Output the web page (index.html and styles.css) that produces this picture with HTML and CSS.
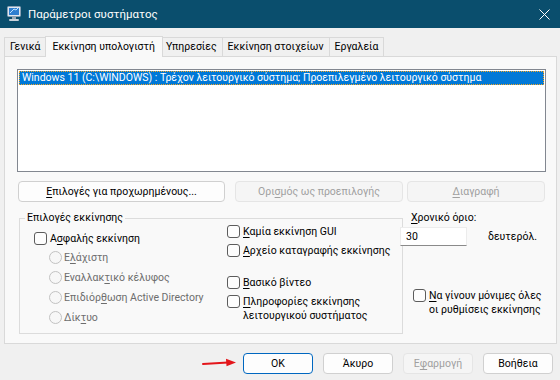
FILE: index.html
```html
<!DOCTYPE html>
<html lang="el">
<head>
    <meta charset="UTF-8">
    <title>Παράμετροι συστήματος</title>
    <link rel="stylesheet" href="styles.css">
</head>
<body>

    <!-- Γραμμή τίτλου -->
    <div class="titlebar">
        <svg class="app-icon" width="14" height="16" viewBox="0 0 14 16">
            <rect x="0.5" y="0.5" width="13" height="10" rx="1" fill="#dfe8f0" stroke="#8aa0b4"/>
            <rect x="2" y="2" width="10" height="7" fill="#2f7fd0"/>
            <path d="M3 7 L7 3 L9 4 L11 2" stroke="#bfe3ff" stroke-width="1" fill="none"/>
            <rect x="5" y="11" width="4" height="2" fill="#9aa8b4"/>
            <rect x="2" y="13" width="10" height="2" rx="1" fill="#c9d2da"/>
        </svg>
        <span class="title">Παράμετροι συστήματος</span>
        <svg class="close" width="11" height="11" viewBox="0 0 11 11">
            <path d="M0.5 0.5 L10.5 10.5 M10.5 0.5 L0.5 10.5" stroke="#fff" stroke-width="1"/>
        </svg>
    </div>

    <!-- Καρτέλες -->
    <div class="tabs">
        <div class="tab">Γενικά</div>
        <div class="tab active">Εκκίνηση υπολογιστή</div>
        <div class="tab">Υπηρεσίες</div>
        <div class="tab">Εκκίνηση στοιχείων</div>
        <div class="tab">Εργαλεία</div>
    </div>

    <div class="panel">
        <div class="listbox">
            <div class="item selected">Windows 11 (C:\WINDOWS) : Τρέχον λειτουργικό σύστημα; Προεπιλεγμένο λειτουργικό σύστημα</div>
        </div>

        <div class="button-row">
            <button class="btn btn-advanced"><u>Ε</u>πιλογές για προχωρημένους...</button>
            <button class="btn btn-set" disabled>Ορι<u>σ</u>μός ως προεπιλογής</button>
            <button class="btn btn-delete" disabled><u>Δ</u>ιαγραφή</button>
        </div>

        <div class="options">
            <fieldset class="boot-group">
                <legend>Επιλογές εκκίνησης</legend>
                <div class="group-body">
                    <div class="col-left">
                        <div class="check-row"><span class="checkbox"></span>Α<u>σ</u>φαλής εκκίνηση</div>
                        <div class="radio-list">
                            <div class="radio-row"><span class="radio"></span>Ε<u>λ</u>άχιστη</div>
                            <div class="radio-row"><span class="radio"></span>Εναλλακ<u>τ</u>ικό κέλυφος</div>
                            <div class="radio-row"><span class="radio"></span>Επιδιόρ<u>θ</u>ωση Active Directory</div>
                            <div class="radio-row"><span class="radio"></span>Δίκ<u>τ</u>υο</div>
                        </div>
                    </div>
                    <div class="col-right">
                        <div class="check-row row-gui"><span class="checkbox"></span><u>Κ</u>αμία εκκίνηση GUI</div>
                        <div class="check-row row-log"><span class="checkbox"></span><u>Α</u>ρχείο καταγραφής εκκίνησης</div>
                        <div class="check-row row-video"><span class="checkbox"></span><u>Β</u>ασικό βίντεο</div>
                        <div class="check-row row-info"><span class="checkbox"></span><span><u>Π</u>ληροφορίες εκκίνησης<br>λειτουργικού συστήματος</span></div>
                    </div>
                </div>
            </fieldset>

            <div class="timeout">
                <div class="timeout-label"><u>Χ</u>ρονικό όριο:</div>
                <div class="timeout-field">
                    <input type="text" value="30">
                    <span class="unit">δευτερόλ.</span>
                </div>
                <div class="check-row row-permanent"><span class="checkbox"></span><span><u>Ν</u>α γίνουν μόνιμες όλες<br>οι ρυθμίσεις εκκίνησης</span></div>
            </div>
        </div>
    </div>

    <div class="footer">
        <button class="btn btn-ok">OK</button>
        <button class="btn">Άκυρο</button>
        <button class="btn" disabled>Ε<u>φ</u>αρμογή</button>
        <button class="btn">Βοήθεια</button>
    </div>

    <!-- Κόκκινο βέλος -->
    <svg class="arrow" width="36" height="10" viewBox="0 0 36 10">
        <path d="M1 6 L26 4.6" stroke="#e3161b" stroke-width="2" stroke-linecap="round"/>
        <path d="M24 0.8 L34 4.4 L24.5 8.2 Z" fill="#e3161b"/>
    </svg>

</body>
</html>
```

FILE: styles.css
```css
body {
    font-family: Roboto, "Noto Sans", sans-serif;
    font-size: 10.5px;
    color: #000;
    background-color: #f0f0f0;
    margin: 0;
    width: 560px;
    height: 380px;
    overflow: hidden;
    position: relative;
}

u {
    text-decoration-thickness: 1px;
    text-underline-offset: 2px;
}

.titlebar {
    height: 28px;
    background-color: #0a4e6d;
    color: #fff;
    display: flex;
    align-items: center;
    padding-left: 7px;
}

.app-icon {
    margin-right: 7px;
}

.title {
    font-size: 11.5px;
    flex: 1;
}

.close {
    margin-right: 10px;
}

.tabs {
    display: flex;
    align-items: flex-end;
    height: 28px;
    padding-left: 4px;
}

.tab {
    height: 18px;
    line-height: 18px;
    padding: 0 5px;
    border: 1px solid #d9d9d9;
    border-bottom: none;
    border-left: none;
    background-color: #f0f0f0;
}

.tab:first-child {
    border-left: 1px solid #d9d9d9;
}

.tab.active {
    height: 20px;
    line-height: 20px;
    background-color: #f9f9f9;
    border-left: 1px solid #d9d9d9;
    margin: 0 -2px 0 -2px;
    padding: 0 7px;
    position: relative;
    top: 1px;
}

.panel {
    box-sizing: border-box;
    width: 553px;
    height: 288px;
    margin-left: 4px;
    background-color: #f9f9f9;
    border: 1px solid #d9d9d9;
    padding: 12px 10px 0 12px;
}

.listbox {
    box-sizing: border-box;
    height: 103px;
    width: 529px;
    background-color: #fff;
    border: 1px solid #828790;
    padding: 1px;
}

.item {
    height: 12px;
    line-height: 12px;
    padding-left: 2px;
    white-space: nowrap;
}

.item.selected {
    background-color: #0078d7;
    color: #fff;
    border: 1px dotted #f5a623;
}

.button-row {
    display: flex;
    margin-top: 9px;
}

.btn {
    font-family: Roboto, "Noto Sans", sans-serif;
    font-size: 10.5px;
    height: 21px;
    padding: 0;
    background-color: #fdfdfd;
    border: 1px solid #d0d0d0;
    border-radius: 4px;
    color: #000;
}

.btn:disabled {
    background-color: #f5f5f5;
    border-color: #e5e5e5;
    color: #a0a0a0;
}

.btn-advanced {
    width: 207px;
    margin-left: 1px;
}

.btn-set {
    width: 168px;
    margin-left: 10px;
}

.btn-delete {
    width: 138px;
    margin-left: 4px;
}

.options {
    display: flex;
    margin-top: 9px;
}

.boot-group {
    box-sizing: border-box;
    width: 384px;
    height: 123px;
    margin: 0 0 0 2px;
    padding: 0 0 0 5px;
    border: 1px solid #dcdcdc;
}

.boot-group legend {
    padding: 0 2px;
    line-height: 14px;
}

.group-body {
    display: flex;
}

.col-left {
    flex: 0 0 202px;
    padding-top: 7px;
    padding-left: 9px;
    box-sizing: border-box;
}

.check-row {
    display: flex;
    align-items: flex-start;
    line-height: 14px;
    white-space: nowrap;
}

.checkbox {
    box-sizing: border-box;
    width: 13px;
    height: 13px;
    border: 1px solid #5c5c5c;
    border-radius: 3px;
    background-color: #fdfdfd;
    margin: 0 3px 0 0;
    flex-shrink: 0;
}

.radio-list {
    margin-left: 15px;
    margin-top: 1px;
    color: #6d6d6d;
}

.radio-row {
    display: flex;
    align-items: center;
    height: 20px;
}

.radio {
    box-sizing: border-box;
    width: 13px;
    height: 13px;
    border: 1px solid #c2c2c2;
    border-radius: 50%;
    background-color: #f7f7f7;
    margin-right: 2px;
}

.row-log {
    margin-top: 5px;
}

.row-video {
    margin-top: 18px;
}

.row-info {
    margin-top: 5px;
}

.timeout {
    margin-left: -3px;
}

.timeout-label {
    line-height: 14px;
    margin-left: 11px;
}

.timeout-field {
    display: flex;
    align-items: center;
    margin-top: 2px;
}

.timeout-field input {
    box-sizing: border-box;
    width: 67px;
    height: 19px;
    border: 1px solid #ececec;
    border-bottom: 1px solid #8a8a8a;
    background-color: #fff;
    font-family: Roboto, "Noto Sans", sans-serif;
    font-size: 10.5px;
    padding: 0 5px;
    margin: 0;
}

.unit {
    margin-left: 21px;
}

.row-permanent {
    margin-top: 43px;
    margin-left: 13px;
}

.footer {
    display: flex;
    justify-content: flex-end;
    gap: 10px;
    margin-top: 9px;
    padding-right: 7px;
}

.footer .btn {
    width: 70px;
}

.btn-ok {
    border-color: #0067c0;
}

.arrow {
    position: absolute;
    left: 202px;
    top: 358px;
}
```
